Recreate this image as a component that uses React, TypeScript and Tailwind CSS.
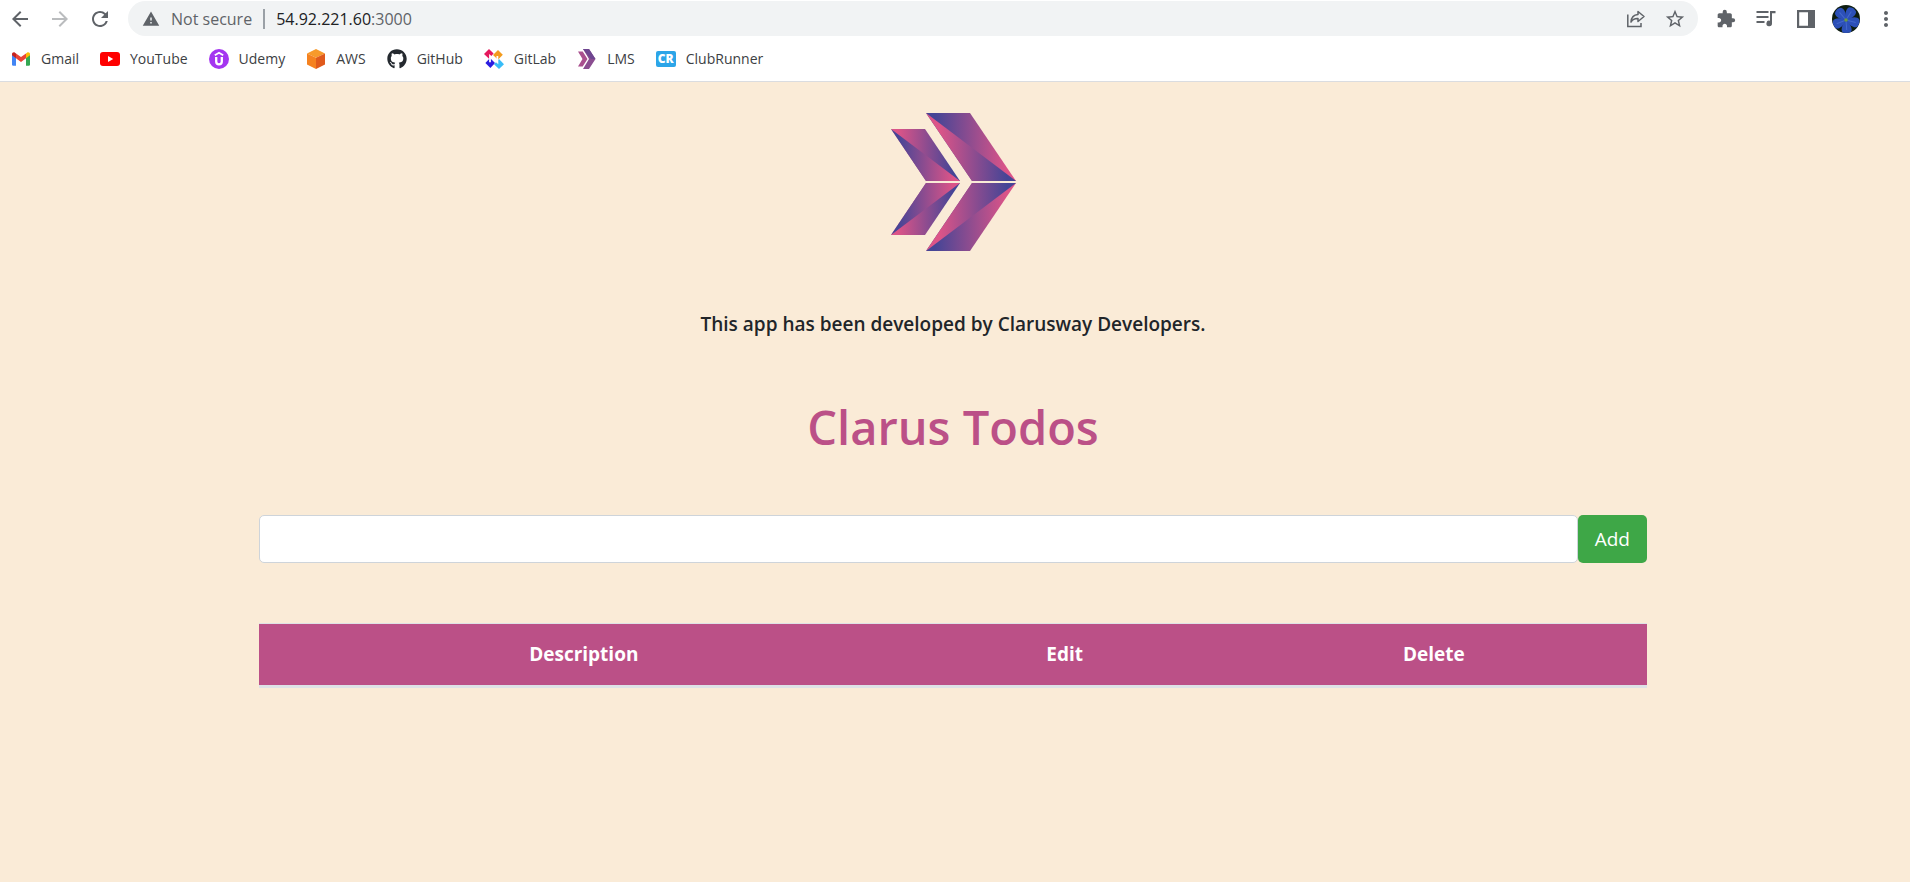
import React, { useState } from "react";
import {
  MdArrowBack,
  MdArrowForward,
  MdExtension,
  MdMoreVert,
  MdRefresh,
  MdStarBorder,
  MdWarning,
} from "react-icons/md";
import { FaGithub } from "react-icons/fa";

function GmailIcon() {
  return (
    <svg viewBox="0 0 20 20" className="size-5">
      <path d="M1 5.2 5 8.2V16.7H2.2A1.2 1.2 0 0 1 1 15.5Z" fill="#4285f4" />
      <path d="M15 8.2 19 5.2V15.5A1.2 1.2 0 0 1 17.8 16.7H15Z" fill="#34a853" />
      <path d="M5 4.4 10 8.1 15 4.4V9.2L10 12.9 5 9.2Z" fill="#ea4335" />
      <path d="M15 4.4 16 3.7C17.3 2.8 19 3.6 19 5.2V6.2L15 9.2Z" fill="#fbbc04" />
      <path d="M5 4.4 4 3.7C2.7 2.8 1 3.6 1 5.2V6.2L5 9.2Z" fill="#c5221f" />
    </svg>
  );
}

function YouTubeIcon() {
  return (
    <svg viewBox="0 0 20 20" className="size-5">
      <rect x="0" y="3" width="20" height="14" rx="3" fill="#f00" />
      <path d="M8 7v6l5.2-3z" fill="#fff" />
    </svg>
  );
}

function UdemyIcon() {
  return (
    <svg viewBox="0 0 20 20" className="size-5">
      <circle cx="10" cy="10" r="10" fill="#a435f0" />
      <path d="M5.8 6.3 10 3.8l4.2 2.5" fill="none" stroke="#fff" strokeWidth="1.8" />
      <path d="M7.2 8v4.6a2.8 2.8 0 0 0 5.6 0V8" fill="none" stroke="#fff" strokeWidth="2.3" />
    </svg>
  );
}

function AwsIcon() {
  return (
    <svg viewBox="0 0 20 20" className="size-5">
      <path d="M10 0 19 4.6 10 8.8 1 4.6Z" fill="#f79a2b" />
      <path d="M1 4.6 10 8.8V20L1 15.4Z" fill="#f58220" />
      <path d="M19 4.6 10 8.8V20l9-4.6Z" fill="#e05a1c" />
    </svg>
  );
}

function GitLabIcon() {
  return (
    <svg viewBox="0 0 20 20" className="size-5">
      <path d="M5 0 9.6 4.6 5 9.8 0 5Z" fill="#e5185d" />
      <path d="M14 1 18.8 5.8 14 10.8 9 6Z" fill="#f49b1d" />
      <path d="M6 9 11 14 6.4 19 1.4 14Z" fill="#2b1de0" />
      <path d="M15 10 20 15.2 15 20 10 15.2Z" fill="#38bdf8" />
      <path d="M6 13.2V7l7.4 6.2V7" fill="none" stroke="#fff" strokeWidth="1.8" />
    </svg>
  );
}

function LmsIcon() {
  return (
    <svg viewBox="0 0 20 20" className="size-5">
      <path d="M6 0h6l6.500 10L12 20H6l6-10Z" fill="#8a4d90" />
      <path d="M12 0 18.500 10H14L6 0Z" fill="#6e4690" />
      <path d="M1 2.500h4.700L10.500 10l-4.800 7.500H1L5.500 10Z" fill="#a94f8e" />
    </svg>
  );
}

function ClubRunnerIcon() {
  return (
    <span className="flex h-4 w-5 items-center justify-center rounded-xs bg-[#2ca5e8] text-xs leading-none font-extrabold text-white">
      CR
    </span>
  );
}

function ShareIcon() {
  return (
    <svg viewBox="0 0 20 20" className="size-5" fill="none" stroke="#5f6368" strokeWidth="1.5">
      <path d="M1.800 5.500V17.500H15V14" />
      <path d="M12 2.500 18 7.500 12 12.500V9.500C8.500 9.300 6.500 10.500 5 13 5.300 8.500 8 5.800 12 5.500Z" strokeLinejoin="round" />
    </svg>
  );
}

function QueueIcon() {
  return (
    <svg viewBox="0 0 20 20" className="size-5" fill="#5f6368">
      <path d="M.500 2H12.500V4H.500ZM.500 7H12.500V9H.500ZM.500 12H8.500V14H.500Z" />
      <path d="M14 2h5.500v2.200H16V14.500a2.800 2.800 0 1 1-2-2.700Z" />
    </svg>
  );
}

function PanelIcon() {
  return (
    <svg viewBox="0 0 20 20" className="size-5">
      <path d="M1 1H19V19H1ZM3.200 3.200V16.800H12V3.200Z" fillRule="evenodd" fill="#5f6368" />
    </svg>
  );
}

function FlowerAvatar() {
  return (
    <svg viewBox="0 0 28 28" className="size-7">
      <clipPath id="avatar-clip">
        <circle cx="14" cy="14" r="14" />
      </clipPath>
      <g clipPath="url(#avatar-clip)">
        <rect width="28" height="28" fill="#0e1d10" />
        {[0, 72, 144, 216, 288].map((angle) => (
          <g key={angle} transform={`rotate(${angle + 32} 14 15)`}>
            <path d="M14 15C9 10 8 5 10 2.500Q14 0 18 2.500C20 5 19 10 14 15Z" fill="#2c50b8" />
            <path d="M14 13V5" stroke="#4468cc" strokeWidth="1" />
          </g>
        ))}
        <circle cx="14" cy="15" r="1.8" fill="#6b9a46" />
      </g>
    </svg>
  );
}

const bookmarks = [
  { label: "Gmail", icon: <GmailIcon /> },
  { label: "YouTube", icon: <YouTubeIcon /> },
  { label: "Udemy", icon: <UdemyIcon /> },
  { label: "AWS", icon: <AwsIcon /> },
  { label: "GitHub", icon: <FaGithub className="size-5 text-[#24292f]" /> },
  { label: "GitLab", icon: <GitLabIcon /> },
  { label: "LMS", icon: <LmsIcon /> },
  { label: "ClubRunner", icon: <ClubRunnerIcon /> },
];

function BrowserBar() {
  return (
    <header className="border-b border-[#dadce0] bg-white text-[#5f6368]">
      <div className="flex items-center pt-px pr-3.5 pl-2">
        <nav className="flex w-30 items-center gap-4" aria-label="History">
          <button aria-label="Back"><MdArrowBack className="size-6" /></button>
          <button aria-label="Forward" className="text-[#babcbe]"><MdArrowForward className="size-6" /></button>
          <button aria-label="Reload"><MdRefresh className="size-6" /></button>
        </nav>
        <div className="flex h-[35px] flex-1 items-center rounded-full bg-[#f1f3f4] pr-3 pl-3.5">
          <MdWarning className="size-[18px]" />
          <span className="ml-[11px] text-base">Not secure</span>
          <span className="mx-[11px] h-5 w-0.5 bg-[#9aa0a6]" />
          <span className="flex-1 text-base">
            <span className="text-[#202124]">54.92.221.60</span>:3000
          </span>
          <button aria-label="Share"><ShareIcon /></button>
          <button aria-label="Bookmark" className="ml-[18px]"><MdStarBorder className="size-[22px]" /></button>
        </div>
        <div className="ml-[18px] flex items-center gap-5">
          <button aria-label="Extensions"><MdExtension className="size-5" /></button>
          <button aria-label="Media"><QueueIcon /></button>
          <button aria-label="Side panel"><PanelIcon /></button>
          <button aria-label="Profile" className="-mx-1"><FlowerAvatar /></button>
          <button aria-label="Menu" className="-mx-0.5"><MdMoreVert className="size-6" /></button>
        </div>
      </div>
      <nav className="flex h-[45px] items-center gap-[21px] pl-[11px] text-sm text-[#3c4043]" aria-label="Bookmarks">
        {bookmarks.map((b) => (
          <a key={b.label} href="#" className="flex items-center gap-2.5">
            {b.icon}
            {b.label}
          </a>
        ))}
      </nav>
    </header>
  );
}

function ClarusLogo() {
  const indigo = "#454596";
  const rose = "#dc5488";
  return (
    <svg viewBox="0 0 125 138" className="h-[138px] w-[125px]" role="img" aria-label="Clarusway">
      <defs>
        <linearGradient id="big-a" gradientUnits="userSpaceOnUse" x1="35" y1="0" x2="125" y2="0">
          <stop offset=".1" stopColor={indigo} />
          <stop offset=".9" stopColor={rose} />
        </linearGradient>
        <linearGradient id="big-b" gradientUnits="userSpaceOnUse" x1="35" y1="0" x2="125" y2="0">
          <stop offset=".15" stopColor={rose} />
          <stop offset=".9" stopColor={indigo} />
        </linearGradient>
        <linearGradient id="small-a" gradientUnits="userSpaceOnUse" x1="0" y1="0" x2="69" y2="0">
          <stop offset=".1" stopColor={rose} />
          <stop offset=".9" stopColor={indigo} />
        </linearGradient>
        <linearGradient id="small-b" gradientUnits="userSpaceOnUse" x1="0" y1="0" x2="69" y2="0">
          <stop offset=".1" stopColor={indigo} />
          <stop offset=".9" stopColor={rose} />
        </linearGradient>
      </defs>
      {/* Each arm is a full parallelogram with its second facet laid on top. */}
      <path d="M35 0H79L125 68H81Z" fill="url(#big-a)" />
      <path d="M35 0 125 68H81Z" fill="url(#big-b)" />
      <path d="M0 16H34L69 68H35Z" fill="url(#small-a)" />
      <path d="M0 16 69 68H35Z" fill="url(#small-b)" />
      <path d="M81 70H125L79 138H35Z" fill="url(#big-a)" />
      <path d="M81 70H125L35 138Z" fill="url(#big-b)" />
      <path d="M35 70H69L34 122H0Z" fill="url(#small-a)" />
      <path d="M35 70H69L0 122Z" fill="url(#small-b)" />
    </svg>
  );
}

export default function App() {
  const [todo, setTodo] = useState("");
  return (
    <div className="flex min-h-screen flex-col bg-[#faebd7] font-['Open_Sans','Noto_Sans',sans-serif]">
      <BrowserBar />
      <main className="flex flex-col items-center pt-[31px] pr-6 pl-5 text-[#212529]">
        <ClarusLogo />
        <h2 className="mt-[61px] text-[19px] leading-6 font-semibold">
          This app has been developed by Clarusway Developers.
        </h2>
        <h1 className="mt-[61px] text-[47px] leading-[60px] font-semibold text-[#bb5087]">Clarus Todos</h1>
        <div className="w-full max-w-[1388px]">
          <form className="mt-[58px] flex" onSubmit={(e) => e.preventDefault()}>
            <input
              type="text"
              aria-label="New todo"
              value={todo}
              onChange={(e) => setTodo(e.target.value)}
              className="h-12 min-w-0 flex-1 rounded-[5px] border border-[#ced4da] bg-white px-4 text-[19px] outline-none"
            />
            <button className="h-12 rounded-[5px] bg-[#3ea747] px-[17px] text-[19px] text-white">Add</button>
          </form>
          <table className="mt-[60px] w-full table-fixed border-collapse text-[19px] text-white">
            <thead>
              <tr className="h-[63px] border-t border-b-3 border-[#dee2e6] bg-[#bb5087]">
                <th className="w-[46.8%] font-bold">Description</th>
                <th className="w-[22.5%] font-bold">Edit</th>
                <th className="font-bold">Delete</th>
              </tr>
            </thead>
            <tbody />
          </table>
        </div>
      </main>
    </div>
  );
}
